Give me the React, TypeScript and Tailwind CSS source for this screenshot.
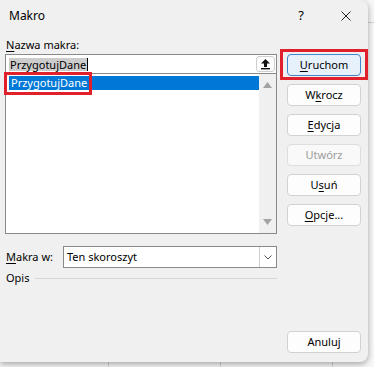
import React from 'react';

const font = { fontFamily: '"Noto Sans", "Open Sans", Arial, sans-serif' };

type BtnProps = {
  label: React.ReactNode;
  primary?: boolean;
  disabled?: boolean;
};

const DialogButton: React.FC<BtnProps> = ({ label, primary, disabled }) => (
  <div
    className={
      'h-[22px] w-[74px] rounded-[4px] border flex items-center justify-center text-[11px] ' +
      (primary
        ? 'border-[#3f86cc] bg-[#e6f1fb] text-black'
        : disabled
          ? 'border-[#dedede] bg-[#f9f9f9] text-[#9c9c9c]'
          : 'border-[#d2d2d2] bg-[#fdfdfd] text-black')
    }
  >
    {label}
  </div>
);

const U: React.FC<{ children: React.ReactNode }> = ({ children }) => (
  <span className="underline underline-offset-2 decoration-[1px]">{children}</span>
);

export default function App() {
  return (
    <div className="relative w-[374px] h-[367px] overflow-hidden bg-[#f7f7f7]" style={font}>
      {/* spreadsheet grid behind the dialog */}
      <div className="absolute left-0 top-[22px] w-full h-px bg-[#d4d4d4]" />
      <div className="absolute left-[108px] top-0 w-px h-full bg-[#d4d4d4]" />
      <div className="absolute left-[220px] top-0 w-px h-full bg-[#d4d4d4]" />
      <div className="absolute left-[332px] top-0 w-px h-full bg-[#d4d4d4]" />

      {/* dialog */}
      <div className="relative w-[368px] h-[362px] bg-[#f0f0f0] rounded-tr-[8px] rounded-br-[8px] shadow-[0_2px_6px_rgba(0,0,0,0.35)] flex flex-col">
        {/* title bar */}
        <div className="h-[32px] flex items-center text-[12px] text-black">
          <span className="ml-[9px]">Makro</span>
          <span className="ml-auto mr-[37px] text-[13px]">?</span>
          <svg width="10" height="10" viewBox="0 0 10 10" className="mr-[17px]">
            <path d="M0.5 0.5 L9.5 9.5 M9.5 0.5 L0.5 9.5" stroke="#222" strokeWidth="1" />
          </svg>
        </div>

        <div className="flex flex-1">
          {/* left column */}
          <div className="ml-[5px] w-[272px] flex flex-col text-[11px] text-black">
            <div className="h-[14px] mt-[6px] ml-[1px] leading-[14px]">
              <U>N</U>azwa makra:
            </div>
            {/* name input */}
            <div className="mt-[2px] h-[20px] border border-[#8a8a8a] bg-white flex items-center">
              <span className="ml-[3px] bg-[#cccccc] leading-[13px] px-px">PrzygotujDane</span>
              <span className="w-px h-[13px] bg-black" />
              <div className="ml-auto mr-[1px] h-[16px] w-[19px] rounded-[3px] border border-[#cfcfcf] bg-[#fdfdfd] flex items-center justify-center">
                <svg width="11" height="12" viewBox="0 0 11 12">
                  <path d="M5.5 1 L10 5.5 L7 5.5 L7 9 L4 9 L4 5.5 L1 5.5 Z" fill="#111" />
                  <rect x="1" y="10" width="9" height="1.4" fill="#111" />
                </svg>
              </div>
            </div>
            {/* macro list */}
            <div className="h-[160px] border border-t-0 border-[#8a8a8a] bg-white flex">
              <div className="flex-1 pt-[2px] pl-[3px]">
                <div className="relative h-[14px] bg-[#0078d7] text-white leading-[14px] pl-[2px]">
                  PrzygotujDane
                  <div className="absolute left-[-5px] top-[-4px] w-[88px] h-[23px] border-[3px] border-[#e0202a]" />
                </div>
              </div>
              <div className="w-[17px] bg-[#f0f0f0] flex flex-col items-center justify-between py-[8px]">
                <svg width="9" height="6" viewBox="0 0 9 6">
                  <path d="M4.5 0 L9 6 L0 6 Z" fill="#a3a3a3" />
                </svg>
                <svg width="9" height="6" viewBox="0 0 9 6">
                  <path d="M0 0 L9 0 L4.5 6 Z" fill="#a3a3a3" />
                </svg>
              </div>
            </div>
            {/* Makra w */}
            <div className="mt-[12px] flex items-center">
              <span className="w-[57px] ml-[1px]">
                <U>M</U>akra w:
              </span>
              <div className="flex-1 h-[22px] border border-[#8a8a8a] bg-white flex items-center">
                <span className="ml-[3px]">Ten skoroszyt</span>
                <div className="ml-auto h-full w-[17px] border-l border-[#cfcfcf] flex items-center justify-center">
                  <svg width="8" height="5" viewBox="0 0 8 5">
                    <path d="M0.5 0.5 L4 4 L7.5 0.5" stroke="#555" strokeWidth="1" fill="none" />
                  </svg>
                </div>
              </div>
            </div>
            {/* Opis */}
            <div className="mt-[3px] flex items-center h-[14px]">
              <span className="ml-[1px]">Opis</span>
              <div className="flex-1 ml-[6px] h-px bg-[#d8d8d8]" />
            </div>
          </div>

          {/* right column */}
          <div className="ml-[10px] w-[74px] flex flex-col pt-[22px] pb-[9px]">
            <div className="relative">
              <DialogButton primary label={<><U>U</U>ruchom</>} />
              <div className="absolute left-[-7px] top-[-5px] w-[88px] h-[31px] border-[3px] border-[#e0202a]" />
            </div>
            <div className="mt-[8px]">
              <DialogButton label={<>W<U>k</U>rocz</>} />
            </div>
            <div className="mt-[8px]">
              <DialogButton label={<><U>E</U>dycja</>} />
            </div>
            <div className="mt-[8px]">
              <DialogButton disabled label="Utwórz" />
            </div>
            <div className="mt-[8px]">
              <DialogButton label={<>U<U>s</U>uń</>} />
            </div>
            <div className="mt-[8px]">
              <DialogButton label={<><U>O</U>pcje...</>} />
            </div>
            <div className="mt-auto">
              <DialogButton label="Anuluj" />
            </div>
          </div>
        </div>
      </div>
    </div>
  );
}
